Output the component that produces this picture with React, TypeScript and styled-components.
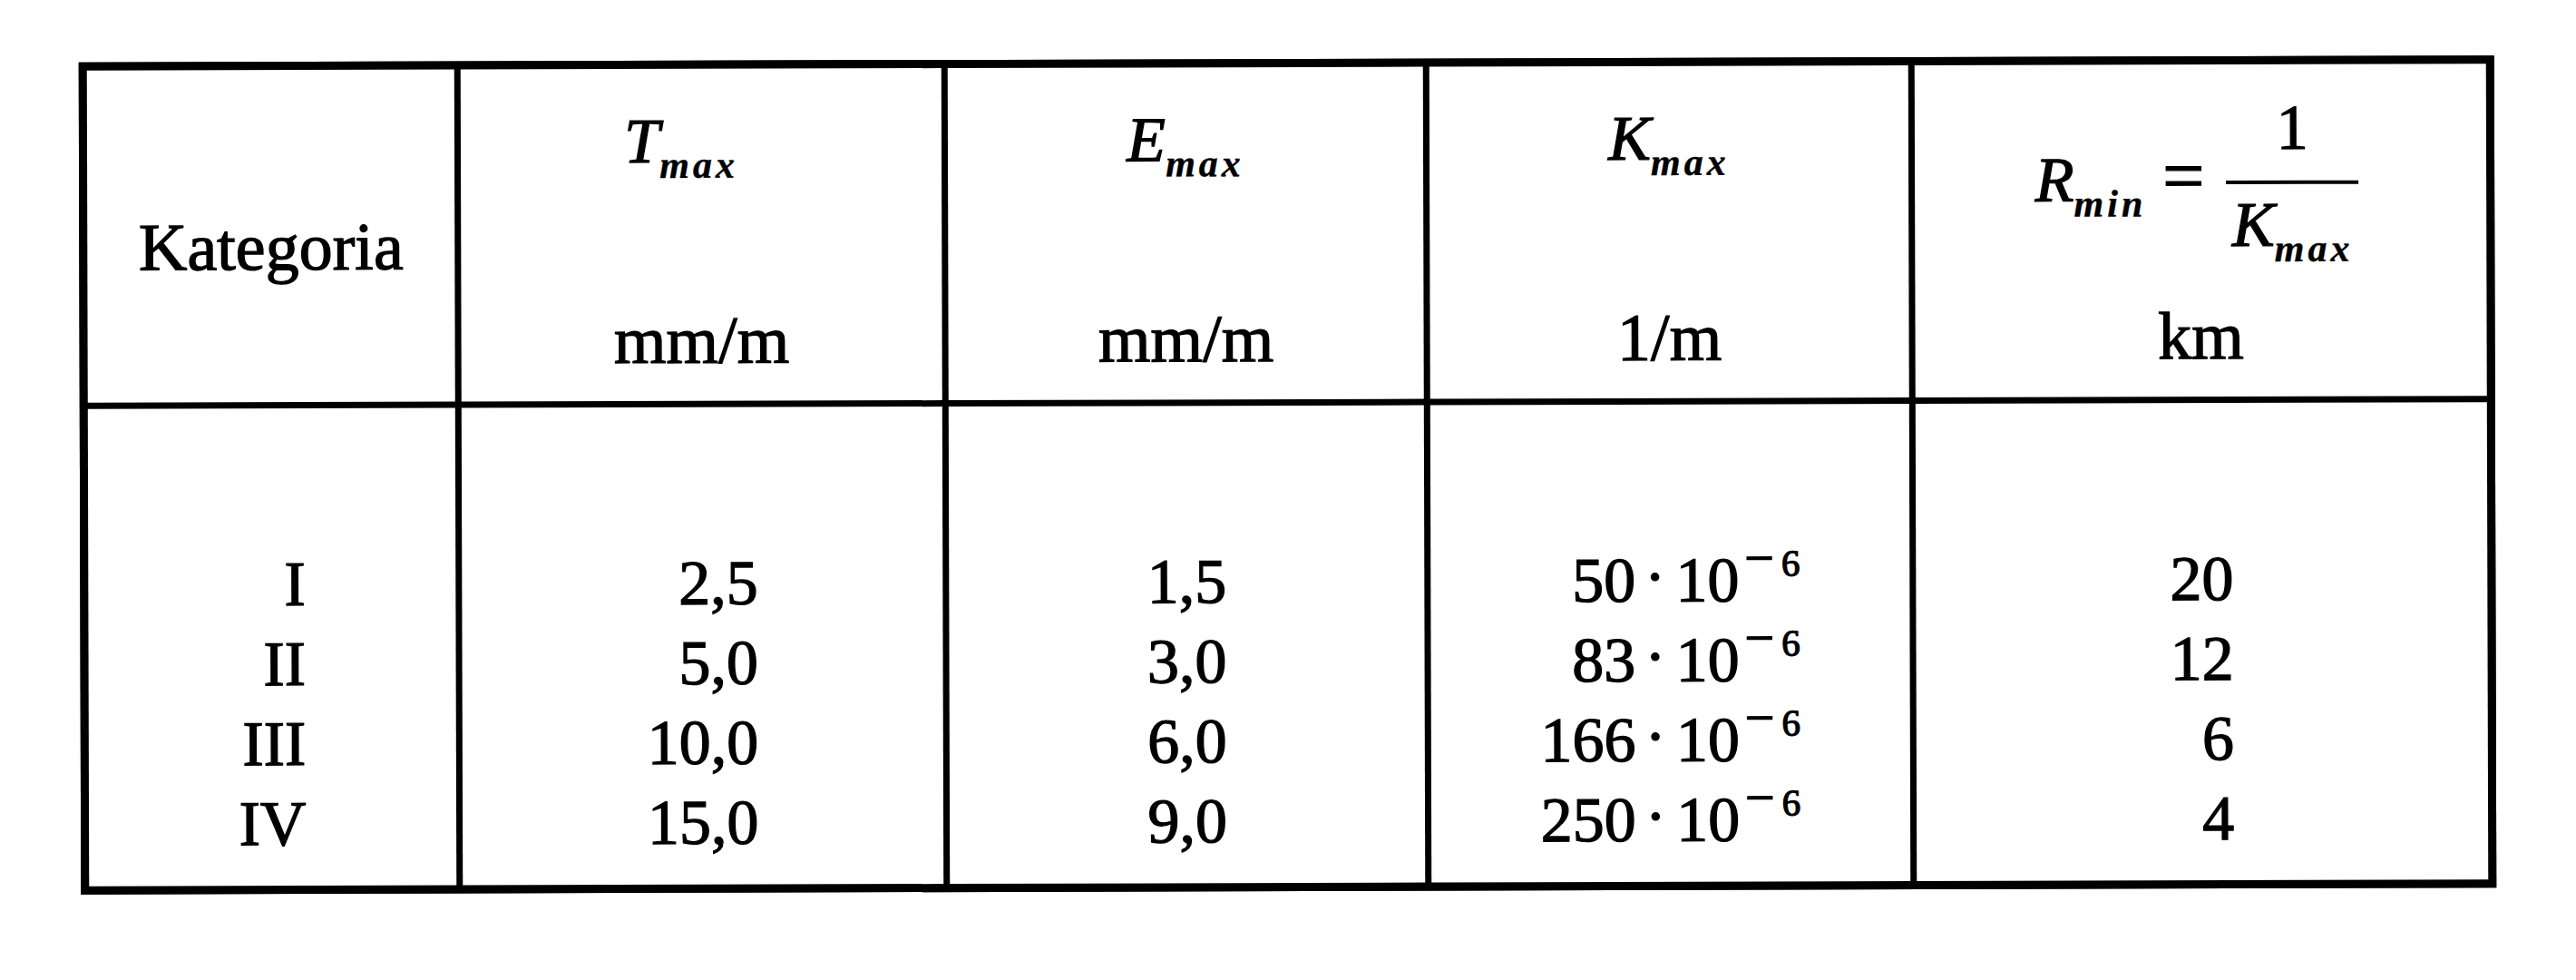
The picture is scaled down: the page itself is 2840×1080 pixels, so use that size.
import React from "react";
import styled, { createGlobalStyle } from "styled-components";

const GlobalStyle = createGlobalStyle`
  html, body {
    margin: 0;
    padding: 0;
    background: #ffffff;
  }
  body {
    font-family: "Liberation Serif", "Times New Roman", serif;
    color: #000000;
  }
`;

const Page = styled.div`
  width: 2840px;
  height: 1080px;
  box-sizing: border-box;
  padding: 65px 0 0 88px;
  background: #ffffff;
  overflow: hidden;
`;

const Table = styled.div`
  display: grid;
  grid-template-columns: 405px 530px 524px 528px 630px;
  grid-template-rows: 366px 526px;
  gap: 7px;
  width: max-content;
  border: 9px solid #000000;
  background: #000000;
  transform: rotate(-0.16deg);
  transform-origin: 50% 50%;
`;

const HeaderCell = styled.div<{ $pad: number }>`
  background: #ffffff;
  display: flex;
  flex-direction: column;
  align-items: center;
  box-sizing: border-box;
  padding-top: ${(p) => p.$pad}px;
  -webkit-text-stroke: 1.3px #000;
`;

const Label = styled.div`
  font-size: 74px;
  line-height: 74px;
  height: 74px;
  white-space: nowrap;
`;

const Symbol = styled.div<{ $shift: number }>`
  font-style: italic;
  font-size: 70px;
  line-height: 74px;
  height: 74px;
  margin-right: ${(p) => p.$shift * 2}px;
  white-space: nowrap;
`;

const Sub = styled.span`
  font-style: italic;
  font-weight: 700;
  font-size: 42px;
  letter-spacing: 4px;
  line-height: 0;
  vertical-align: -17px;
  -webkit-text-stroke: 0.4px #000;
`;

const Unit = styled.div<{ $gap: number }>`
  font-size: 74px;
  line-height: 74px;
  height: 74px;
  margin-top: ${(p) => p.$gap}px;
  white-space: nowrap;
`;

const FormulaRow = styled.div`
  display: flex;
  align-items: flex-start;
  margin-right: 8px;
`;

const FormulaLeft = styled.div`
  margin-top: 55px;
  font-style: italic;
  font-size: 70px;
  line-height: 74px;
  height: 74px;
  white-space: nowrap;
`;

const Eq = styled.span`
  font-style: normal;
  font-size: 82px;
  line-height: 0;
  margin: 0 24px 0 18px;
`;

const Fraction = styled.div`
  display: flex;
  flex-direction: column;
  align-items: center;
  width: 146px;
`;

const Numerator = styled.div`
  font-size: 70px;
  line-height: 70px;
  height: 70px;
`;

const Bar = styled.div`
  width: 146px;
  height: 4px;
  margin-top: 23px;
  background: #000000;
`;

const Denominator = styled.div`
  margin-top: 10px;
  font-style: italic;
  font-size: 70px;
  line-height: 70px;
  height: 70px;
  white-space: nowrap;
`;

const BodyCell = styled.div`
  background: #ffffff;
  display: flex;
  justify-content: center;
  box-sizing: border-box;
  padding-top: 150px;
  -webkit-text-stroke: 1.3px #000;
`;

const Values = styled.div`
  text-align: right;
  font-size: 70px;
  line-height: 88px;
  white-space: nowrap;
`;

const ValueRow = styled.div`
  height: 88px;
`;

const Dot = styled.span`
  margin: 0 11px 0 10px;
  vertical-align: 4px;
  line-height: 0;
`;

const Sup = styled.span`
  vertical-align: 28px;
  line-height: 0;
`;

const Minus = styled.span`
  font-size: 58px;
  margin-left: 6px;
`;

const Exp = styled.span`
  font-size: 41px;
  margin-left: 8px;
`;

const categories = ["I", "II", "III", "IV"];
const tValues = ["2,5", "5,0", "10,0", "15,0"];
const eValues = ["1,5", "3,0", "6,0", "9,0"];
const kValues = ["50", "83", "166", "250"];
const rValues = ["20", "12", "6", "4"];

const SymbolHeader: React.FC<{
  main: string;
  sub: string;
  unit: string;
  shift?: number;
}> = ({ main, sub, unit, shift = 0 }) => (
  <HeaderCell $pad={43}>
    <Symbol $shift={shift}>
      {main}
      <Sub>{sub}</Sub>
    </Symbol>
    <Unit $gap={145}>{unit}</Unit>
  </HeaderCell>
);

const SimpleColumn: React.FC<{ items: string[] }> = ({ items }) => (
  <BodyCell>
    <Values>
      {items.map((v) => (
        <ValueRow key={v}>{v}</ValueRow>
      ))}
    </Values>
  </BodyCell>
);

export default function App() {
  return (
    <>
      <GlobalStyle />
      <Page>
        <Table>
          <HeaderCell $pad={158}>
            <Label>Kategoria</Label>
          </HeaderCell>
          <SymbolHeader main="T" sub="max" unit="mm/m" shift={22} />
          <SymbolHeader main="E" sub="max" unit="mm/m" />
          <SymbolHeader main="K" sub="max" unit="1/m" />
          <HeaderCell $pad={35}>
            <FormulaRow>
              <FormulaLeft>
                R<Sub>min</Sub>
                <Eq>=</Eq>
              </FormulaLeft>
              <Fraction>
                <Numerator>1</Numerator>
                <Bar />
                <Denominator>
                  K<Sub>max</Sub>
                </Denominator>
              </Fraction>
            </FormulaRow>
            <Unit $gap={50}>km</Unit>
          </HeaderCell>

          <SimpleColumn items={categories} />
          <SimpleColumn items={tValues} />
          <SimpleColumn items={eValues} />
          <BodyCell>
            <Values>
              {kValues.map((n) => (
                <ValueRow key={n}>
                  {n}
                  <Dot>·</Dot>10
                  <Sup>
                    <Minus>−</Minus>
                    <Exp>6</Exp>
                  </Sup>
                </ValueRow>
              ))}
            </Values>
          </BodyCell>
          <SimpleColumn items={rValues} />
        </Table>
      </Page>
    </>
  );
}
